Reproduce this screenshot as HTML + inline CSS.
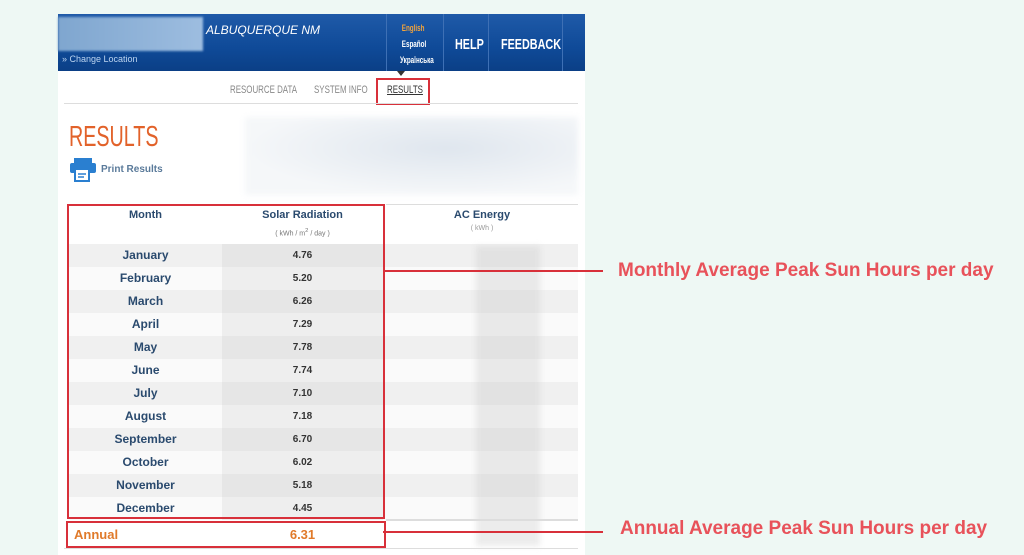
<!DOCTYPE html>
<html><head><meta charset="utf-8"><style>
body{margin:0;width:1024px;height:555px;background:#eef8f4;position:relative;overflow:hidden;font-family:"Liberation Sans",Arial,sans-serif}
.a{position:absolute}
.page{left:58px;top:14px;width:527px;height:541px;background:#fff}
.hdr{left:58px;top:14px;width:527px;height:57px;background:linear-gradient(#1f5aa8,#0f4a98 60%,#0b3f86)}
.nar{transform:scaleX(0.72);transform-origin:left top;white-space:nowrap}
.row{left:68px;width:510px;height:23px;font-size:12px;font-weight:bold}
.row .m{position:absolute;left:0;width:155px;text-align:center;color:#2a4a6e;line-height:23px}
.row .v{position:absolute;left:154px;width:161px;height:23px;text-align:center;color:#333;font-size:10px;line-height:23px}
.red{border:2px solid #d8303a}
.ann{color:#e8525a;font-weight:bold;font-size:19px;white-space:nowrap}
</style></head><body>
<div class="a page"></div>
<div class="a hdr"></div>
<div class="a" style="left:58px;top:17px;width:145px;height:34px;background:linear-gradient(90deg,#7fa6cf,#9dbde0);filter:blur(1px)"></div>
<div class="a" style="left:62px;top:54px;color:#bcd4f0;font-size:9px">» Change Location</div>
<div class="a" style="left:206px;top:23px;color:#fff;font-size:12px;font-style:italic">ALBUQUERQUE NM</div>
<div class="a" style="left:386px;top:14px;width:1px;height:57px;background:#3e70b5"></div>
<div class="a" style="left:443px;top:14px;width:1px;height:57px;background:#3e70b5"></div>
<div class="a" style="left:488px;top:14px;width:1px;height:57px;background:#3e70b5"></div>
<div class="a" style="left:562px;top:14px;width:1px;height:57px;background:#3e70b5"></div>
<div class="a" style="left:400px;top:20px;font-size:9px;line-height:16px;color:#fff;font-weight:bold;transform:scaleX(0.7);transform-origin:left top;white-space:nowrap"><span style="color:#f2a33a">&nbsp;English</span><br>&nbsp;Español<br>Українська</div>
<div class="a nar" style="left:455px;top:36px;color:#fff;font-size:15px;font-weight:bold">HELP</div>
<div class="a nar" style="left:501px;top:36px;color:#fff;font-size:15px;font-weight:bold">FEEDBACK</div>
<div class="a" style="left:397px;top:71px;width:0;height:0;border-left:4px solid transparent;border-right:4px solid transparent;border-top:5px solid #333"></div>
<div class="a nar" style="left:230px;top:84px;font-size:11px;color:#888">RESOURCE DATA</div>
<div class="a nar" style="left:314px;top:84px;font-size:11px;color:#888">SYSTEM INFO</div>
<div class="a red" style="left:376px;top:78px;width:50px;height:23px"></div>
<div class="a nar" style="left:387px;top:84px;font-size:11px;color:#333;text-decoration:underline">RESULTS</div>
<div class="a" style="left:64px;top:103px;width:514px;height:1px;background:#ddd"></div>
<div class="a" style="left:245px;top:117px;width:333px;height:78px;background:radial-gradient(ellipse at 60% 40%,#dfe6ee,#f5f7f9 70%);filter:blur(3px)"></div>
<div class="a nar" style="left:69px;top:121px;font-size:29px;color:#e2622a;transform:scaleX(0.68)">RESULTS</div>
<svg class="a" style="left:70px;top:158px" width="28" height="24" viewBox="0 0 28 24"><rect x="4" y="0" width="18" height="5" fill="#2a7fd0"/><rect x="0" y="5" width="26" height="10" rx="2" fill="#2a7fd0"/><rect x="5" y="11" width="14" height="12" fill="#fff" stroke="#2a7fd0" stroke-width="2"/><line x1="8" y1="16" x2="16" y2="16" stroke="#2a7fd0" stroke-width="1.5"/><line x1="8" y1="19" x2="14" y2="19" stroke="#2a7fd0" stroke-width="1.5"/></svg>
<div class="a" style="left:101px;top:164px;font-size:10px;font-weight:bold;color:#5a7a9a">Print Results</div>
<div class="a" style="left:386px;top:204px;width:192px;height:1px;background:#ddd"></div>
<div class="a" style="left:68px;top:209px;width:155px;text-align:center;font-size:11px;font-weight:bold;color:#2a4a6e">Month</div>
<div class="a" style="left:222px;top:209px;width:161px;text-align:center;font-size:11px;font-weight:bold;color:#2a4a6e">Solar Radiation</div>
<div class="a" style="left:222px;top:228px;width:161px;text-align:center;font-size:7px;color:#777">( kWh / m<sup>2</sup> / day )</div>
<div class="a" style="left:386px;top:209px;width:192px;text-align:center;font-size:11px;font-weight:bold;color:#2a4a6e">AC Energy</div>
<div class="a" style="left:386px;top:225px;width:192px;text-align:center;font-size:7px;color:#999">( kWh )</div>

<div class="a row" style="top:244px;background:#f0f0f0"><div class="m">January</div><div class="v" style="background:#e6e6e6">4.76</div></div>
<div class="a row" style="top:267px;background:#fafafa"><div class="m">February</div><div class="v" style="background:#eeeeee">5.20</div></div>
<div class="a row" style="top:290px;background:#f0f0f0"><div class="m">March</div><div class="v" style="background:#e6e6e6">6.26</div></div>
<div class="a row" style="top:313px;background:#fafafa"><div class="m">April</div><div class="v" style="background:#eeeeee">7.29</div></div>
<div class="a row" style="top:336px;background:#f0f0f0"><div class="m">May</div><div class="v" style="background:#e6e6e6">7.78</div></div>
<div class="a row" style="top:359px;background:#fafafa"><div class="m">June</div><div class="v" style="background:#eeeeee">7.74</div></div>
<div class="a row" style="top:382px;background:#f0f0f0"><div class="m">July</div><div class="v" style="background:#e6e6e6">7.10</div></div>
<div class="a row" style="top:405px;background:#fafafa"><div class="m">August</div><div class="v" style="background:#eeeeee">7.18</div></div>
<div class="a row" style="top:428px;background:#f0f0f0"><div class="m">September</div><div class="v" style="background:#e6e6e6">6.70</div></div>
<div class="a row" style="top:451px;background:#fafafa"><div class="m">October</div><div class="v" style="background:#eeeeee">6.02</div></div>
<div class="a row" style="top:474px;background:#f0f0f0"><div class="m">November</div><div class="v" style="background:#e6e6e6">5.18</div></div>
<div class="a row" style="top:497px;background:#fafafa"><div class="m">December</div><div class="v" style="background:#eeeeee">4.45</div></div>
<div class="a" style="left:476px;top:246px;width:64px;height:300px;background:rgba(200,200,200,0.35);filter:blur(3px)"></div>
<div class="a" style="left:386px;top:519px;width:192px;height:2px;background:#ddd"></div>
<div class="a" style="left:64px;top:548px;width:514px;height:1px;background:#ddd"></div>

<div class="a red" style="left:67px;top:204px;width:314px;height:311px"></div>
<div class="a red" style="left:66px;top:521px;width:316px;height:23px"></div>
<div class="a" style="left:74px;top:527px;font-size:13px;font-weight:bold;color:#e07a2a">Annual</div>
<div class="a" style="left:222px;top:527px;width:161px;text-align:center;font-size:13px;font-weight:bold;color:#e07a2a">6.31</div>

<div class="a" style="left:383px;top:270px;width:220px;height:2px;background:#d8303a"></div>
<div class="a" style="left:383px;top:531px;width:220px;height:2px;background:#d8303a"></div>
<div class="a ann" style="left:618px;top:260px">Monthly Average Peak Sun Hours per day</div>
<div class="a ann" style="left:620px;top:518px">Annual Average Peak Sun Hours per day</div>
</body></html>
